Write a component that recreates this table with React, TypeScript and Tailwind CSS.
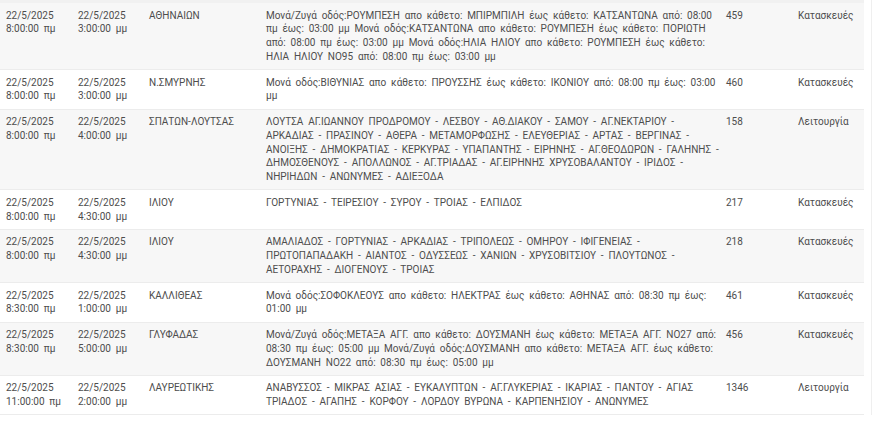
const rows = [
  {
    from: ["22/5/2025", "8:00:00 πμ"],
    to: ["22/5/2025", "3:00:00 μμ"],
    area: "ΑΘΗΝΑΙΩΝ",
    desc: "Μονά/Ζυγά οδός:ΡΟΥΜΠΕΣΗ απο κάθετο: ΜΠΙΡΜΠΙΛΗ έως κάθετο: ΚΑΤΣΑΝΤΩΝΑ από: 08:00 πμ έως: 03:00 μμ Μονά οδός:ΚΑΤΣΑΝΤΩΝΑ απο κάθετο: ΡΟΥΜΠΕΣΗ έως κάθετο: ΠΟΡΙΩΤΗ από: 08:00 πμ έως: 03:00 μμ Μονά οδός:ΗΛΙΑ ΗΛΙΟΥ απο κάθετο: ΡΟΥΜΠΕΣΗ έως κάθετο: ΗΛΙΑ ΗΛΙΟΥ ΝΟ95 από: 08:00 πμ έως: 03:00 μμ",
    code: "459",
    type: "Κατασκευές",
  },
  {
    from: ["22/5/2025", "8:00:00 πμ"],
    to: ["22/5/2025", "3:00:00 μμ"],
    area: "Ν.ΣΜΥΡΝΗΣ",
    desc: "Μονά οδός:ΒΙΘΥΝΙΑΣ απο κάθετο: ΠΡΟΥΣΣΗΣ έως κάθετο: ΙΚΟΝΙΟΥ από: 08:00 πμ έως: 03:00 μμ",
    code: "460",
    type: "Κατασκευές",
  },
  {
    from: ["22/5/2025", "8:00:00 πμ"],
    to: ["22/5/2025", "4:00:00 μμ"],
    area: "ΣΠΑΤΩΝ-ΛΟΥΤΣΑΣ",
    desc: "ΛΟΥΤΣΑ ΑΓ.ΙΩΑΝΝΟΥ ΠΡΟΔΡΟΜΟΥ - ΛΕΣΒΟΥ - ΑΘ.ΔΙΑΚΟΥ - ΣΑΜΟΥ - ΑΓ.ΝΕΚΤΑΡΙΟΥ - ΑΡΚΑΔΙΑΣ - ΠΡΑΣΙΝΟΥ - ΑΘΕΡΑ - ΜΕΤΑΜΟΡΦΩΣΗΣ - ΕΛΕΥΘΕΡΙΑΣ - ΑΡΤΑΣ - ΒΕΡΓΙΝΑΣ - ΑΝΟΙΞΗΣ - ΔΗΜΟΚΡΑΤΙΑΣ - ΚΕΡΚΥΡΑΣ - ΥΠΑΠΑΝΤΗΣ - ΕΙΡΗΝΗΣ - ΑΓ.ΘΕΟΔΩΡΩΝ - ΓΑΛΗΝΗΣ - ΔΗΜΟΣΘΕΝΟΥΣ - ΑΠΟΛΛΩΝΟΣ - ΑΓ.ΤΡΙΑΔΑΣ - ΑΓ.ΕΙΡΗΝΗΣ ΧΡΥΣΟΒΑΛΑΝΤΟΥ - ΙΡΙΔΟΣ - ΝΗΡΙΗΔΩΝ - ΑΝΩΝΥΜΕΣ - ΑΔΙΕΞΟΔΑ",
    code: "158",
    type: "Λειτουργία",
  },
  {
    from: ["22/5/2025", "8:00:00 πμ"],
    to: ["22/5/2025", "4:30:00 μμ"],
    area: "ΙΛΙΟΥ",
    desc: "ΓΟΡΤΥΝΙΑΣ - ΤΕΙΡΕΣΙΟΥ - ΣΥΡΟΥ - ΤΡΟΙΑΣ - ΕΛΠΙΔΟΣ",
    code: "217",
    type: "Κατασκευές",
  },
  {
    from: ["22/5/2025", "8:00:00 πμ"],
    to: ["22/5/2025", "4:30:00 μμ"],
    area: "ΙΛΙΟΥ",
    desc: "ΑΜΑΛΙΑΔΟΣ - ΓΟΡΤΥΝΙΑΣ - ΑΡΚΑΔΙΑΣ - ΤΡΙΠΟΛΕΩΣ - ΟΜΗΡΟΥ - ΙΦΙΓΕΝΕΙΑΣ - ΠΡΩΤΟΠΑΠΑΔΑΚΗ - ΑΙΑΝΤΟΣ - ΟΔΥΣΣΕΩΣ - ΧΑΝΙΩΝ - ΧΡΥΣΟΒΙΤΣΙΟΥ - ΠΛΟΥΤΩΝΟΣ - ΑΕΤΟΡΑΧΗΣ - ΔΙΟΓΕΝΟΥΣ - ΤΡΟΙΑΣ",
    code: "218",
    type: "Κατασκευές",
  },
  {
    from: ["22/5/2025", "8:30:00 πμ"],
    to: ["22/5/2025", "1:00:00 μμ"],
    area: "ΚΑΛΛΙΘΕΑΣ",
    desc: "Μονά οδός:ΣΟΦΟΚΛΕΟΥΣ απο κάθετο: ΗΛΕΚΤΡΑΣ έως κάθετο: ΑΘΗΝΑΣ από: 08:30 πμ έως: 01:00 μμ",
    code: "461",
    type: "Κατασκευές",
  },
  {
    from: ["22/5/2025", "8:30:00 πμ"],
    to: ["22/5/2025", "5:00:00 μμ"],
    area: "ΓΛΥΦΑΔΑΣ",
    desc: "Μονά/Ζυγά οδός:ΜΕΤΑΞΑ ΑΓΓ. απο κάθετο: ΔΟΥΣΜΑΝΗ έως κάθετο: ΜΕΤΑΞΑ ΑΓΓ. ΝΟ27 από: 08:30 πμ έως: 05:00 μμ Μονά/Ζυγά οδός:ΔΟΥΣΜΑΝΗ απο κάθετο: ΜΕΤΑΞΑ ΑΓΓ. έως κάθετο: ΔΟΥΣΜΑΝΗ ΝΟ22 από: 08:30 πμ έως: 05:00 μμ",
    code: "456",
    type: "Κατασκευές",
  },
  {
    from: ["22/5/2025", "11:00:00 πμ"],
    to: ["22/5/2025", "2:00:00 μμ"],
    area: "ΛΑΥΡΕΩΤΙΚΗΣ",
    desc: "ΑΝΑΒΥΣΣΟΣ - ΜΙΚΡΑΣ ΑΣΙΑΣ - ΕΥΚΑΛΥΠΤΩΝ - ΑΓ.ΓΛΥΚΕΡΙΑΣ - ΙΚΑΡΙΑΣ - ΠΑΝΤΟΥ - ΑΓΙΑΣ ΤΡΙΑΔΟΣ - ΑΓΑΠΗΣ - ΚΟΡΦΟΥ - ΛΟΡΔΟΥ ΒΥΡΩΝΑ - ΚΑΡΠΕΝΗΣΙΟΥ - ΑΝΩΝΥΜΕΣ",
    code: "1346",
    type: "Λειτουργία",
  },
];

export default function App() {
  return (
    <div className="flex w-[875px] h-[431px] bg-white overflow-hidden font-['Roboto',sans-serif] text-[10px] leading-[13.75px] text-[#4d4d4d] [word-spacing:2.3px]">
      <div className="w-[864px] self-start border-t-[3px] border-[#f1f1f1]">
        {rows.map((r, i) => (
          <div
            key={i}
            className={`grid grid-cols-[72px_71px_117px_460px_72px_72px] border-b border-[#ececec] ${
              i % 2 === 0 ? "bg-[#f7f7f7]" : "bg-white"
            }`}
          >
            <div className="px-[6px] py-[5.5px]">
              {r.from[0]}
              <br />
              {r.from[1]}
            </div>
            <div className="px-[6px] py-[5.5px]">
              {r.to[0]}
              <br />
              {r.to[1]}
            </div>
            <div className="px-[6px] py-[5.5px]">{r.area}</div>
            <div className="pl-[6px] pr-[1px] py-[5.5px]">{r.desc}</div>
            <div className="px-[6px] py-[5.5px]">{r.code}</div>
            <div className="px-[6px] py-[5.5px]">{r.type}</div>
          </div>
        ))}
      </div>
      <div className="ml-[7px] w-px h-[415px] bg-[#efefef]" />
    </div>
  );
}
